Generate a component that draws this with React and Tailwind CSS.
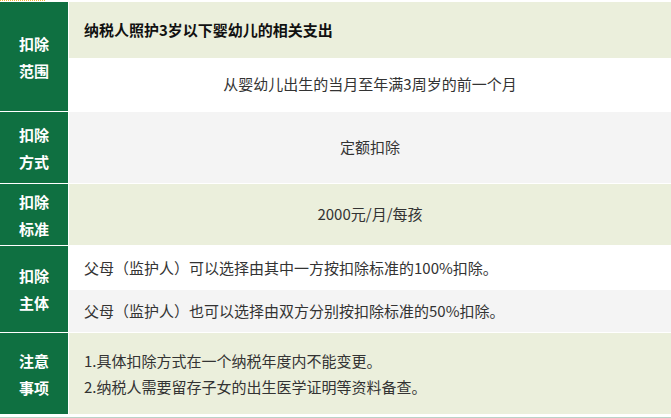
export default function App() {
  const label = 'w-[69px] shrink-0 bg-[#0f7041] border-r border-white flex flex-col items-center justify-center text-white font-bold text-[15px] leading-[27px]';
  return (
    <div className="w-[671px] h-[418px] bg-white overflow-hidden text-[#333] text-[15px]" style={{ fontFamily: '"Microsoft YaHei", "Noto Sans CJK SC", "Noto Sans", sans-serif' }}>
      <div className="h-[2px]">
        <div className="w-[45px] border-t border-dotted border-[#f0b43c]" />
      </div>

      {/* 扣除范围 */}
      <div className="flex border-b border-white">
        <div className={label}>
          <span>扣除</span>
          <span>范围</span>
        </div>
        <div className="flex-1 flex flex-col">
          <div className="h-[56px] bg-[#ebefdc] flex items-center pl-[15px] font-bold text-[#111]">
            纳税人照护3岁以下婴幼儿的相关支出
          </div>
          <div className="h-[53px] bg-white flex items-center justify-center">
            从婴幼儿出生的当月至年满3周岁的前一个月
          </div>
        </div>
      </div>

      {/* 扣除方式 */}
      <div className="flex border-b border-white">
        <div className={label}>
          <span>扣除</span>
          <span>方式</span>
        </div>
        <div className="flex-1 h-[71px] bg-[#f4f4f4] flex items-center justify-center">
          定额扣除
        </div>
      </div>

      {/* 扣除标准 */}
      <div className="flex border-b border-white">
        <div className={label}>
          <span>扣除</span>
          <span>标准</span>
        </div>
        <div className="flex-1 h-[61px] bg-[#ebefdc] flex items-center justify-center">
          2000元/月/每孩
        </div>
      </div>

      {/* 扣除主体 */}
      <div className="flex border-b border-white">
        <div className={label}>
          <span>扣除</span>
          <span>主体</span>
        </div>
        <div className="flex-1 flex flex-col">
          <div className="h-[44px] bg-white flex items-center pl-[15px]">
            父母（监护人）可以选择由其中一方按扣除标准的100%扣除。
          </div>
          <div className="h-[42px] bg-[#f4f4f4] flex items-center pl-[15px]">
            父母（监护人）也可以选择由双方分别按扣除标准的50%扣除。
          </div>
        </div>
      </div>

      {/* 注意事项 */}
      <div className="flex border-b border-white">
        <div className={label}>
          <span>注意</span>
          <span>事项</span>
        </div>
        <div className="flex-1 h-[81px] bg-[#ebefdc] flex flex-col justify-center pl-[15px] leading-[26px]">
          <span>1.具体扣除方式在一个纳税年度内不能变更。</span>
          <span>2.纳税人需要留存子女的出生医学证明等资料备查。</span>
        </div>
      </div>

      <div className="mt-[2px] border-t border-[#b9d3c7]" />
    </div>
  );
}
